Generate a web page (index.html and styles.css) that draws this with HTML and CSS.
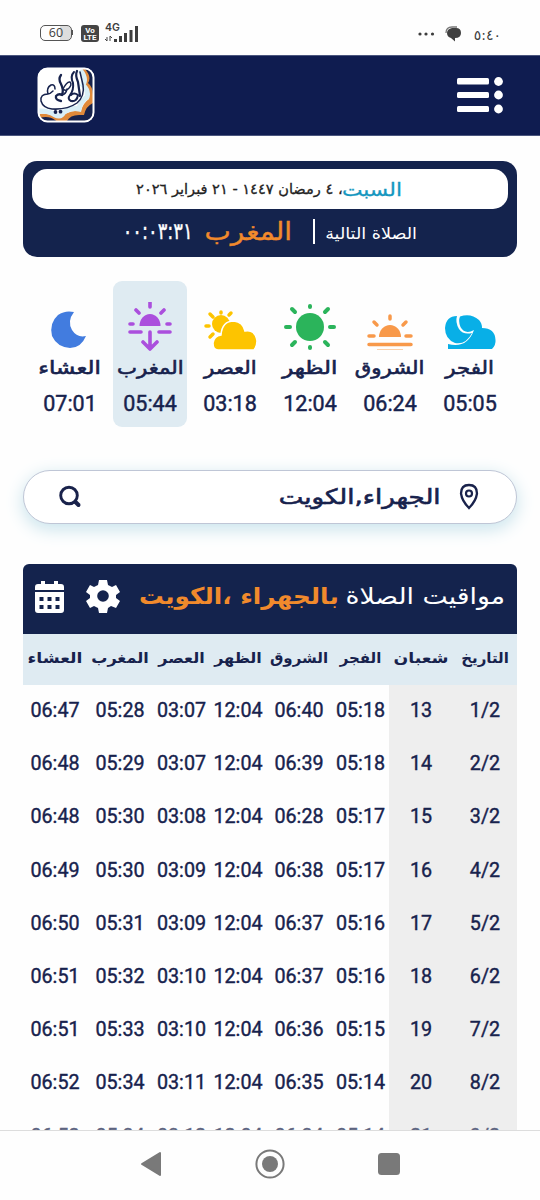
FILE: index.html
```html
<!DOCTYPE html>
<html lang="ar" dir="rtl">
<head>
<meta charset="utf-8">
<title>مواقيت الصلاة</title>
<link rel="stylesheet" href="styles.css">
</head>
<body>
<div class="screen">
  <div class="status" dir="ltr">
    <div class="status-left">
      <span class="battery">60</span>
      <span class="volte"><b>Vo</b><b>LTE</b></span>
      <span class="signal"><b>4G</b>
        <svg width="34" height="17" viewBox="0 0 34 17"><path d="M2 12v4M0 14l2 2M5 11v5M5 11l2 2" stroke="#444" fill="none"/><path d="M9 14h3v3H9zM14 11h3v6h-3zM19 8h3v9h-3zM24.500 5h3v12h-3zM30 1h3v16h-3z" fill="#3d3d3d"/></svg>
      </span>
    </div>
    <div class="status-right">
      <svg width="18" height="6" viewBox="0 0 18 6"><g fill="#3d3d3d"><circle cx="3" cy="3" r="1.600"/><circle cx="9" cy="3" r="1.600"/><circle cx="15.500" cy="3" r="1.600"/></g></svg>
      <svg width="17" height="16" viewBox="0 0 17 16"><path d="M1 7Q1 1 7 1h5" fill="none" stroke="#777" stroke-width="1.300"/><path d="M7 2h4q5 0 5 5t-6 5v3.500L6 12Q2 11 2 7t5-5z" fill="#404040"/></svg>
      <span class="clock">٥:٤٠</span>
    </div>
  </div>

  <header class="topbar" dir="ltr">
    <svg class="logo" width="60" height="58" viewBox="0 0 60 58">
      <defs><clipPath id="tile"><rect x="2" y="2" width="54" height="52" rx="8"/></clipPath></defs>
      <rect x="1" y="1" width="56" height="54" rx="9" fill="#fff"/>
      <g clip-path="url(#tile)">
        <path d="M2 56V47Q12 46 18 50Q25 53 28 47Q36 43 44 44Q46 36 52 32Q53 25 48 18Q52 10 44 2H58V56z" fill="#e08a3a"/>
        <path d="M2 44Q13 44 18 48Q24 51 27 45Q34 40 42 42Q43 35 50 30Q52 24 46 18Q50 11 43 3" fill="none" stroke="#d9eff6" stroke-width="5"/>
        <path d="M2 54V51Q12 48 18 53L22 56zM30 54Q33 48 42 48L47 48Q49 39 56 36V54zM56 28Q56 20 51 16Q55 10 48 2H57z" fill="#17234d"/>
      </g>
      <g fill="none" stroke="#17234d" stroke-width="1.500" stroke-linecap="round" stroke-linejoin="round">
        <path d="M18 22Q18 17 14 18Q9 21 11 27Q13 27 16 24M11 27Q3 27 4 34Q6 41 15 42Q30 43 40 36Q48 29 46 18L43 5"/>
        <path d="M24 8Q21 12 24 17Q27 23 25 28Q22 26 19 29Q18 33 24 34" stroke-width="2.300"/>
        <path d="M25 28Q29 27 30 22M26 22Q30 14 33 15Q36 18 30 23Q28 24 26 22"/>
        <path d="M37 5Q33 9 36 16Q37 23 33 28Q30 32 34 34Q40 35 41 28Q37 25 34 28" stroke-width="2"/>
        <path d="M40 4Q38 8 41 15L43 29" stroke-width="2.200"/>
      </g>
      <g fill="#17234d"><circle cx="18.500" cy="45" r="1.900"/><circle cx="23.500" cy="44.700" r="1.900"/></g>
      <rect x="1.500" y="1.500" width="55" height="53" rx="9" fill="none" stroke="#fff" stroke-width="2"/>
    </svg>
    <svg width="46" height="37" viewBox="0 0 46 37"><g fill="#fff"><rect y="1" width="32" height="6.500" rx="1.500"/><rect y="15" width="32" height="6" rx="1.500"/><rect y="29" width="32" height="6" rx="1.500"/><circle cx="41.500" cy="4.500" r="4.400"/><circle cx="41.500" cy="18" r="4.400"/><circle cx="41.500" cy="32" r="4.400"/></g></svg>
  </header>

  <main>
    <section class="banner">
      <div class="date"><b>السبت</b><span>، ٤ رمضان ١٤٤٧ - ٢١ فبراير ٢٠٢٦</span></div>
      <div class="next">
        <span class="next-label">الصلاة التالية</span>
        <i></i>
        <span class="next-name">المغرب</span>
        <span class="countdown" dir="ltr">٠٠:٠٣:٣١</span>
      </div>
    </section>

    <section class="prayers">
      <div class="prayer"><svg width="54" height="50" viewBox="0 0 54 50"><path d="M14 14Q3 14 2 26Q2 37 12 41Q23 43 29 31Q20 33 16 27Q12 20 14 14z" fill="#08afe7"/><path d="M17 14.500Q28 11 36 18Q39 21 39 26Q52 26 52.500 38Q53 43 49 47H5V42Q24 47 31 28Q22 33 17.500 25Q15 19 17 14.500z" fill="#08afe7"/></svg><span>الفجر</span><time>05:05</time></div>
      <div class="prayer"><svg width="54" height="50" viewBox="0 0 54 50"><path d="M16 35a11 12 0 0 1 22 0z" fill="#f8994a"/><path d="M6 34h5M43 34h5M11 20l3 3M43 20l-3 3M27 14v3M6 42.500h42" stroke="#f8994a" stroke-width="3.500" stroke-linecap="round"/><path d="M14 47.500h26" stroke="#fbd1ab" stroke-width="1"/></svg><span>الشروق</span><time>06:24</time></div>
      <div class="prayer"><svg width="54" height="50" viewBox="0 0 54 50"><circle cx="27" cy="25" r="14" fill="#2bb45b"/><path d="M27 4v1M27 45v1M3 25h4M47 25h4M9 7l3 3M45 7l-3 3M9 43l3-3M45 43l-3-3" stroke="#2bb45b" stroke-width="4" stroke-linecap="round"/></svg><span class="wide">الظهر</span><time>12:04</time></div>
      <div class="prayer"><svg width="54" height="50" viewBox="0 0 54 50"><circle cx="18" cy="22" r="9" fill="#fdc400"/><path d="M3 24h3M7 12l3 3M18 10v1M28 11l-2 2M7 35l3-3" stroke="#fdc400" stroke-width="3.500" stroke-linecap="round"/><path d="M15 48Q10 48 10 41Q11 34 18 33Q19 19 31 19Q40 20 42 29Q52 27 54 39Q54 44 51 48z" fill="#fdc400" stroke="#fff" stroke-width="1.500"/></svg><span>العصر</span><time>03:18</time></div>
      <div class="prayer active"><svg width="54" height="50" viewBox="0 0 54 50"><g transform="translate(0 -3)"><path d="M16.500 27a10.500 12 0 0 1 21 0z" fill="#ab4fdd"/><path d="M27 3v5M13 11l3 3M41 11l-3 3M7 25h3M44 25h3M7 33h11M36 33h11M27 33v15M20 43l7 7 7-7" fill="none" stroke="#ab4fdd" stroke-width="3.600" stroke-linecap="round" stroke-linejoin="round"/></g></svg><span>المغرب</span><time>05:44</time></div>
      <div class="prayer"><svg width="54" height="50" viewBox="0 0 54 50"><path d="M31 10Q24 19 29 28Q34 36 43 34Q38 46 27 46Q14 45 9 34Q6 21 15 13Q22 8 31 10z" fill="#427cdf"/></svg><span class="wide">العشاء</span><time>07:01</time></div>
    </section>

    <div class="search">
      <svg width="20" height="28" viewBox="0 0 20 28"><path d="M10 2Q18 2 18 10.500Q17 18 10 25Q3 18 2 10.500Q2 2 10 2z" fill="none" stroke="#19224b" stroke-width="2.300"/><circle cx="10" cy="10.500" r="3" fill="none" stroke="#19224b" stroke-width="2.200"/></svg>
      <span>الجهراء,الكويت</span>
      <svg width="24" height="24" viewBox="0 0 24 24"><circle cx="10" cy="10.500" r="8.300" fill="none" stroke="#19224b" stroke-width="2.900"/><path d="M16.500 17l3 3" stroke="#19224b" stroke-width="4" stroke-linecap="round"/></svg>
    </div>

    <section class="timetable">
      <div class="title">
        <h1><span>مواقيت الصلاة</span><b>بالجهراء ،الكويت</b></h1>
        <svg class="gear" width="34" height="34" viewBox="0 0 34 34"><path d="M13 1h8l1 5 4 2 4-2 4 7-4 3v3l4 3-4 7-5-2-3 2-1 5h-8l-1-5-4-2-4 2-4-7 4-3v-3l-4-3 4-7 4 2 4-2z" fill="#fff"/><circle cx="17" cy="17" r="5.800" fill="#14234d"/></svg>
        <svg width="29" height="33" viewBox="0 0 29 33"><path d="M6 1h4v3h9V1h4v3h3q3 0 3 3v3H0V7q0-3 3-3h3zM0 12h29v18q0 3-3 3H3q-3 0-3-3z" fill="#fff"/><path d="M4.500 17h4v4h-4zM12.500 17h4v4h-4zM20.500 17h4v4h-4zM4.500 25h4v4h-4zM12.500 25h4v4h-4zM20.500 25h4v4h-4z" fill="#14234d"/></svg>
      </div>
      <div class="row head"><span>التاريخ</span><span class="wide">شعبان</span><span>الفجر</span><span>الشروق</span><span class="mid">الظهر</span><span class="mid">العصر</span><span class="mid">المغرب</span><span class="wide">العشاء</span></div>
      <div class="row"><span>1/2</span><span>13</span><span>05:18</span><span>06:40</span><span>12:04</span><span>03:07</span><span>05:28</span><span>06:47</span></div>
      <div class="row"><span>2/2</span><span>14</span><span>05:18</span><span>06:39</span><span>12:04</span><span>03:07</span><span>05:29</span><span>06:48</span></div>
      <div class="row"><span>3/2</span><span>15</span><span>05:17</span><span>06:28</span><span>12:04</span><span>03:08</span><span>05:30</span><span>06:48</span></div>
      <div class="row"><span>4/2</span><span>16</span><span>05:17</span><span>06:38</span><span>12:04</span><span>03:09</span><span>05:30</span><span>06:49</span></div>
      <div class="row"><span>5/2</span><span>17</span><span>05:16</span><span>06:37</span><span>12:04</span><span>03:09</span><span>05:31</span><span>06:50</span></div>
      <div class="row"><span>6/2</span><span>18</span><span>05:16</span><span>06:37</span><span>12:04</span><span>03:10</span><span>05:32</span><span>06:51</span></div>
      <div class="row"><span>7/2</span><span>19</span><span>05:15</span><span>06:36</span><span>12:04</span><span>03:10</span><span>05:33</span><span>06:51</span></div>
      <div class="row"><span>8/2</span><span>20</span><span>05:14</span><span>06:35</span><span>12:04</span><span>03:11</span><span>05:34</span><span>06:52</span></div>
      <div class="row faded"><span>9/2</span><span>21</span><span>05:14</span><span>06:34</span><span>12:04</span><span>03:12</span><span>05:34</span><span>06:52</span></div>
    </section>
  </main>

  <nav class="navbar" dir="ltr">
    <svg width="22" height="26" viewBox="0 0 22 26"><path d="M20 2v22L2 13z" fill="#797979" stroke="#797979" stroke-width="2" stroke-linejoin="round"/></svg>
    <svg width="30" height="30" viewBox="0 0 30 30"><circle cx="15" cy="15" r="13.600" fill="none" stroke="#797979" stroke-width="2"/><circle cx="15" cy="15" r="8" fill="#797979"/></svg>
    <svg width="22" height="22" viewBox="0 0 22 22"><rect width="22" height="22" rx="3.500" fill="#797979"/></svg>
  </nav>
</div>
</body>
</html>
```
FILE: styles.css
```css
* { box-sizing: border-box; }
body { margin: 0; background: #fefefe; color: #17224d; font-family: Roboto, "DejaVu Sans", sans-serif; }
svg { display: block; flex: none; }
.screen { width: 540px; height: 1200px; display: flex; flex-direction: column; overflow: hidden; }

.status { height: 55px; flex: none; display: flex; justify-content: space-between; padding: 22px 39px 0 40px; color: #3d3d3d; }
.status-left, .status-right { display: flex; align-items: flex-start; }
.battery { width: 32px; height: 16px; margin: 3px 9px 0 0; border: 1.500px solid #555; border-radius: 5px; background: linear-gradient(90deg, #fefefe 62%, #ddd 62%); font: 12.500px/13px "Open Sans", sans-serif; text-align: center; }
.battery { display: flex; justify-content: center; }
.battery::after { content: ""; width: 2px; height: 5px; margin: 4px -10px 0 8px; background: #555; flex: none; }
.battery::before { content: ""; width: 0; }
.volte { width: 18px; height: 17px; margin: 3px 6px 0 0; border-radius: 3px; background: #444; color: #fff; display: flex; flex-direction: column; align-items: center; font: 8px/7px Roboto, sans-serif; padding-top: 1.500px; }
.signal { display: grid; }
.signal > * { grid-area: 1 / 1; }
.signal b { font: 600 10.500px/12px Inter, sans-serif; }
.signal svg { margin-top: 3px; }
.status-right { gap: 12px; }
.status-right svg:first-child { margin-top: 9px; margin-right: -2px; }
.status-right svg:nth-child(2) { margin-top: 4px; }
.clock { font: 14px/22px "DejaVu Sans", sans-serif; margin-top: 2px; }

.topbar { height: 81px; flex: none; background: #0f1c50; display: flex; align-items: center; justify-content: space-between; padding: 0 37px; border-bottom: 1px solid #4b567e; border-top: 1px solid #4b567e; }

main { flex: 1; min-height: 0; overflow: hidden; padding: 25px 23px 0; }
.banner { height: 96px; background: #14234d; border-radius: 14px; padding: 8px 9px 0; font-family: "DejaVu Sans", sans-serif; }
.date { height: 40px; border-radius: 15px; background: #fff; color: #222; display: flex; align-items: center; padding-right: 106px; font-size: 14px; white-space: nowrap; -webkit-text-stroke: 0.300px; }
.date b { width: 59px; color: #1597bf; font-size: 18px; font-weight: 400; transform: scaleX(1.210); transform-origin: right; }
.date span { transform: scaleX(1.040); transform-origin: right; }
.next { height: 44px; display: flex; align-items: center; color: #fff; padding-right: 91px; white-space: nowrap; }
.next-label { font-size: 16px; width: 91px; transform: scaleX(1.100); transform-origin: right; padding-top: 5px; }
.next i { width: 2px; height: 25px; background: #fff; margin: 0 11px 0 21px; }
.next-name { font-size: 25px; width: 87px; color: #f18a2c; transform: scaleX(1.115); transform-origin: right; -webkit-text-stroke: 0.400px; }
.countdown { font-size: 23px; margin-right: 12px; transform: scaleX(0.780); transform-origin: right; -webkit-text-stroke: 0.400px; }

.prayers { display: flex; margin: 24px 7px 0 2px; }
.prayer { width: 74px; height: 146px; margin: 0 3px; flex: none; display: flex; flex-direction: column; align-items: center; padding-top: 21px; border-radius: 9px; white-space: nowrap; }
.prayer.active { background: #dfebf2; }
.prayer span { font: 18px/30px "DejaVu Sans", sans-serif; height: 30px; margin-top: 1px; transform: scaleX(1.180); -webkit-text-stroke: 0.600px; }
.prayer span.wide { transform: scaleX(1.270); }
.prayer time { font-size: 21.500px; line-height: 26px; margin-top: 8px; -webkit-text-stroke: 0.450px; }

.search { height: 54px; margin-top: 43px; border: 1px solid #bfc6d6; border-radius: 27px; background: #fff; box-shadow: 0 5px 18px #c6e2eb; display: flex; align-items: center; padding: 0 37px 0 35px; }
.search span { font: 21px/40px "DejaVu Sans", sans-serif; margin: 0 18px 0 auto; transform: scaleX(1.240); transform-origin: right; -webkit-text-stroke: 0.600px; }

.timetable { margin-top: 40px; border-radius: 6px 6px 0 0; overflow: hidden; }
.title { height: 70px; background: #14234d; color: #fff; display: flex; align-items: center; padding: 0 12px 6px 12px; }
.title h1 { flex: 1; display: flex; margin: 0; font: 23px/50px "DejaVu Sans", sans-serif; white-space: nowrap; }
.title h1 span { width: 166px; transform: scaleX(1.160); transform-origin: right; }
.title h1 b { color: #f18a2c; transform: scaleX(1.075); transform-origin: right; }
.gear { margin-left: 22px; }
.row { display: grid; grid-template-columns: 64px 64px 57px 66px 56px 57px 66px 64px; height: 53.200px; font-size: 19.700px; text-align: center; line-height: 51px; -webkit-text-stroke: 0.400px; }
.row span { white-space: nowrap; }
.row:not(.head) span:nth-child(-n+2) { background: #eee; }
.row.faded { color: #5d6480; }
.row.head { height: 51px; background: #dfebf2; font: bold 15px/48px "DejaVu Sans", sans-serif; -webkit-text-stroke: 0; }
.head .wide { transform: scaleX(1.150); }
.head .mid { transform: scaleX(1.070); }

.navbar { height: 70px; flex: none; border-top: 1px solid #ddd; display: flex; align-items: center; justify-content: space-between; padding: 0 140px 3px; background: #fefefe; }
```
